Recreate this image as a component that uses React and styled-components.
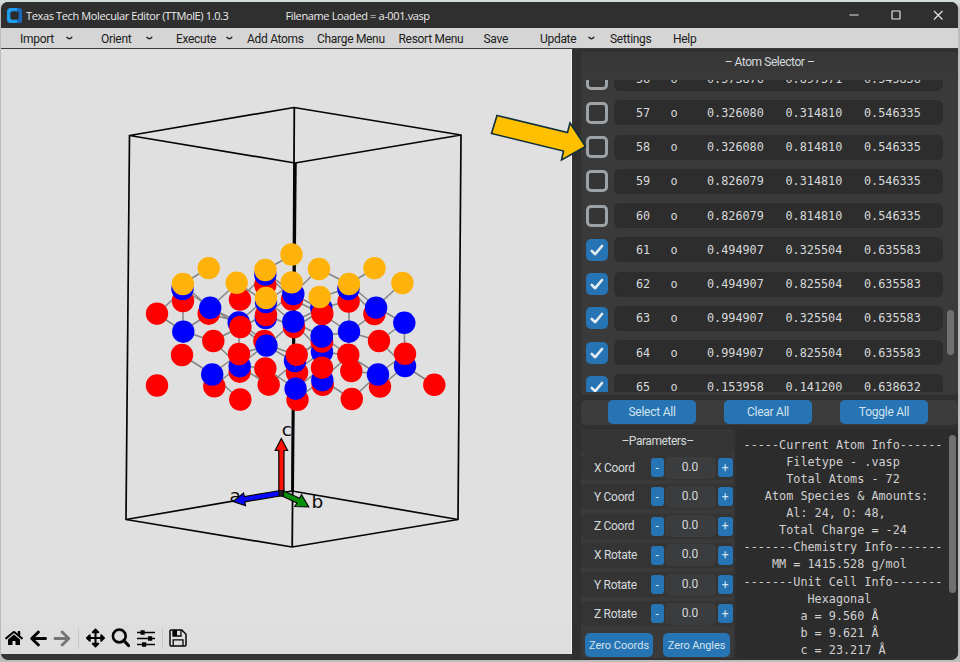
import React from 'react';
import styled, { createGlobalStyle } from 'styled-components';
import { FaHome, FaArrowLeft, FaArrowRight, FaArrowsAlt } from 'react-icons/fa';

const Global = createGlobalStyle`
  * { box-sizing: border-box; }
  body { margin: 0; background: #c9c9c9; overflow: hidden; font-family: Roboto, "Liberation Sans", sans-serif; }
`;

const Desktop = styled.div`
  position: relative;
  width: 960px;
  height: 662px;
  padding: 2px 2px 2px 1px;
  background: linear-gradient(#d3dcda 0, #d3dcda 2px, #bcbcbc 10px, #bcbcbc 100%);
`;

const Window = styled.div`
  height: 658px;
  display: flex;
  flex-direction: column;
  border-radius: 7px;
  overflow: hidden;
  background: #343434;
`;

const TitleBar = styled.header`
  height: 26px;
  flex: none;
  display: flex;
  align-items: center;
  padding-left: 6px;
  background: #2f2f2f;
  color: #ececec;
  font: 11px "Open Sans", sans-serif;
  letter-spacing: -0.37px;
  white-space: pre;
`;

const AppTitle = styled.span`
  width: 259.5px;
  margin-left: 4px;
`;

const WindowControls = styled.div`
  margin-left: auto;
  margin-right: 15px;
  display: flex;
  gap: 32px;
  svg { display: block; }
`;

const MenuBar = styled.nav`
  height: 21px;
  flex: none;
  display: flex;
  align-items: center;
  background: #d5d5d5;
  border-bottom: 1px solid #3b3b3b;
  padding: 1px 0 0 19px;
  color: #202020;
  font-size: 12px;
  letter-spacing: -0.3px;
`;

const MenuItem = styled.div`
  width: ${p => p.$w}px;
  flex: none;
  display: flex;
  align-items: center;
  white-space: nowrap;
`;

const MenuLabel = styled.span`
  width: ${p => p.$w ? p.$w + 'px' : 'auto'};
`;

const Main = styled.main`
  flex: 1;
  min-height: 0;
  display: flex;
`;

const Viewport = styled.section`
  width: 571px;
  height: 605px;
  flex: none;
  display: flex;
  flex-direction: column;
  background: #e0e0e0;
  border-right: 1px solid #f0f0f0;
  border-bottom-left-radius: 3px;
`;

const Scene = styled.svg`
  display: block;
  flex: none;
`;

const PlotTools = styled.div`
  flex: 1;
  display: flex;
  align-items: center;
  padding-left: 3px;
  background: #dedede;
  color: #050505;
`;

const Tool = styled.span`
  width: ${p => p.$w || 24}px;
  height: 20px;
  flex: none;
  display: flex;
  align-items: center;
  justify-content: center;
  color: ${p => (p.$muted ? '#757575' : '#050505')};
`;

const ToolRule = styled.span`
  width: 1px;
  height: 21px;
  margin: 0 ${p => p.$gap}px;
  background: #c6c6c6;
`;

const Side = styled.aside`
  flex: 1;
  display: flex;
  flex-direction: column;
  padding: 3px 1px 0 9px;
  background: #303030;
  color: #d5dadd;
`;

const SelectorFrame = styled.div`
  height: 343px;
  flex: none;
  background: #383838;
  border-radius: 4px;
`;

const SelectorTitle = styled.h2`
  height: 22px;
  margin: 0;
  font-size: 12px;
  line-height: 21px;
  font-weight: 400;
  letter-spacing: -0.45px;
  text-align: center;
`;

const ScrollFrame = styled.div`
  height: 321px;
  display: flex;
  justify-content: space-between;
  padding: 6px 4px 6px 5px;
  background: #3a3a3a;
  border-radius: 5px;
`;

const AtomList = styled.div`
  width: 357px;
  height: 312px;
  overflow: hidden;
`;

const AtomRows = styled.div`
  margin-top: -14px;
  display: flex;
  flex-direction: column;
  gap: 9.25px;
`;

const AtomRow = styled.div`
  height: 25px;
  display: flex;
  gap: 6px;
  align-items: center;
`;

const Check = styled.span`
  width: 22px;
  height: 22px;
  flex: none;
  border-radius: 5px;
  border: ${p => (p.$on ? '0' : '3px solid #9da2a6')};
  background: ${p => (p.$on ? '#2674b4' : '#353535')};
  display: grid;
  place-items: center;
`;

const AtomRecord = styled.div`
  width: 329px;
  height: 25px;
  padding-left: 22px;
  border-radius: 6px;
  background: #2d2d2d;
  display: grid;
  grid-template-columns: 34.5px 36.500px 78.500px 78.500px 78px;
  align-items: center;
  font: 11.8px "DejaVu Sans Mono", monospace;
  color: #d6d9db;
  white-space: pre;
`;

const ListTrack = styled.div`
  width: 7px;
  padding-top: 230px;
`;

const Thumb = styled.div`
  width: 7px;
  height: ${p => p.$h}px;
  border-radius: 4px;
  background: #707070;
`;

const SelectBar = styled.div`
  height: 25px;
  margin-top: 5px;
  flex: none;
  display: flex;
  gap: 28px;
  padding-left: 27px;
  background: #3c3c3c;
  border-radius: 5px;
`;

const Button = styled.button`
  width: ${p => p.$w}px;
  height: ${p => p.$h || 24}px;
  padding: 0;
  flex: none;
  border: 0;
  border-radius: ${p => (p.$small ? 3 : 5)}px;
  background: #2674b4;
  color: #d3e3ee;
  font: ${p => p.$size || 12}px Roboto, sans-serif;
  letter-spacing: ${p => p.$track || '-0.25px'};
  white-space: nowrap;
`;

const Lower = styled.div`
  height: 229px;
  margin-top: 4px;
  display: flex;
  gap: 2px;
`;

const Parameters = styled.div`
  width: 153px;
  background: #3a3a3a;
  border-radius: 4px;
`;

const ParametersTitle = styled.h2`
  height: 25px;
  margin: 0;
  line-height: 24px;
  font-size: 12px;
  font-weight: 400;
  letter-spacing: -0.45px;
  text-align: center;
  background: #353535;
  border-radius: 5px;
`;

const ParamRows = styled.div`
  height: 177px;
  padding-top: 1px;
  display: flex;
  flex-direction: column;
  gap: 4.25px;
`;

const ParamRow = styled.div`
  height: 25px;
  display: flex;
  align-items: center;
  background: #343434;
  border-radius: 5px;
`;

const ParamName = styled.span`
  width: 69.500px;
  padding-left: 13px;
  font-size: 12px;
  letter-spacing: -0.3px;
  white-space: nowrap;
`;

const ParamValue = styled.span`
  width: 51px;
  height: 22px;
  margin: 0 2px 0 1px;
  border-radius: 5px;
  background: #3b3c3d;
  text-align: center;
  line-height: 21px;
  font-size: 12px;
`;

const ZeroRow = styled.div`
  display: flex;
  gap: 10px;
  padding: 2px 0 0 4px;
`;

const InfoPanel = styled.div`
  width: 222px;
  background: #2c2c2c;
  border-radius: 6px 6px 6px 5px;
  display: flex;
  justify-content: space-between;
  padding: 6px 2px 0 8px;
`;

const InfoText = styled.div`
  width: 198px;
  padding-top: 1.6px;
  flex: none;
  font: 11.8px/17.13px "DejaVu Sans Mono", monospace;
  color: #d0d0d0;
  text-align: center;
  white-space: pre;
  display: flex;
  flex-direction: column;
  align-items: center;
`;

const PointerArrow = styled.svg`
  position: absolute;
  left: 485px;
  top: 105px;
`;

const GREY = '#848484';
const RED = '#ff0000';
const BLUE = '#0000ff';
const GOLD = '#ffb20a';

const bonds = [
  [208, 268, 183, 284], [183, 290, 157, 314], [157, 314, 183, 331], [183, 300, 183, 331],
  [183, 284, 210, 308], [186, 291, 240, 327], [183, 331, 209, 314], [183, 331, 213, 341], [213, 341, 240, 327],
  [210, 308, 237, 283], [210, 308, 239, 322], [209, 314, 240, 322], [182, 355, 212, 374], [212, 374, 239, 354],
  [213, 341, 239, 366], [214, 386, 239, 366], [212, 374, 240, 400], [239, 327, 239, 354],
  [237, 283, 266, 302], [240, 299, 265, 274], [239, 322, 266, 298], [240, 327, 266, 315],
  [239, 322, 264, 341], [240, 327, 267, 346], [239, 354, 267, 346], [239, 366, 269, 342],
  [239, 366, 269, 385], [240, 366, 265, 368], [265, 270, 292, 255], [265, 272, 292, 299], [266, 272, 294, 294],
  [266, 302, 294, 282], [266, 300, 293, 322], [265, 315, 293, 294], [266, 315, 295, 327],
  [267, 346, 293, 322], [267, 345, 297, 355], [267, 346, 295, 362], [268, 385, 297, 361], [265, 368, 296, 389],
  [293, 294, 319, 269], [293, 294, 321, 309], [292, 299, 322, 314], [293, 322, 321, 308], [294, 328, 322, 310],
  [293, 322, 322, 336], [293, 322, 322, 352], [295, 361, 322, 336], [297, 354, 322, 342],
  [297, 370, 322, 352], [295, 389, 322, 368], [297, 399, 322, 380], [319, 269, 349, 284],
  [320, 297, 349, 288], [321, 308, 349, 301], [322, 314, 349, 332], [322, 336, 349, 332],
  [322, 336, 348, 355], [322, 352, 348, 355], [322, 380, 349, 355], [322, 380, 352, 399],
  [349, 284, 375, 268], [349, 284, 376, 307], [349, 288, 374, 314], [349, 300, 349, 332],
  [349, 332, 374, 314], [349, 332, 379, 341], [376, 307, 402, 283], [376, 307, 404, 323],
  [379, 341, 404, 323], [379, 341, 405, 366], [404, 323, 405, 354], [405, 366, 434, 385],
  [405, 354, 378, 374], [405, 366, 380, 387], [352, 399, 378, 374], [351, 371, 378, 374], [348, 355, 378, 374],
];

const atoms = [
  [RED, 183, 301], [RED, 157, 313.7], [RED, 208.7, 313.7], [RED, 240, 299.6], [RED, 213.3, 341],
  [RED, 182, 355], [RED, 239.7, 371.7], [RED, 214.3, 386.3], [RED, 157, 385.5], [RED, 240.3, 399.5],
  [RED, 265.3, 368.5], [RED, 268.7, 384.7], [RED, 264.3, 341], [RED, 265.3, 285], [RED, 292, 299.5],
  [RED, 294, 327], [RED, 297, 372.5], [RED, 297.5, 399.8], [RED, 322, 342.5], [RED, 322.7, 384.8],
  [RED, 348.6, 301.5], [RED, 348.3, 354.7], [RED, 351.3, 371], [RED, 351.8, 399], [RED, 374.4, 314],
  [RED, 379, 341], [RED, 380, 386.6], [RED, 434.3, 384.8],
  [BLUE, 182.5, 289], [BLUE, 183.3, 331.7], [BLUE, 238.7, 322.4], [BLUE, 210.2, 307.8],
  [BLUE, 212.2, 374.5], [BLUE, 239.7, 366.2], [BLUE, 265.3, 274.5], [BLUE, 265.7, 318],
  [BLUE, 266.5, 345.6], [BLUE, 293.3, 294], [BLUE, 293.3, 321.7], [BLUE, 295, 361],
  [BLUE, 321.3, 308], [BLUE, 322, 352], [BLUE, 322.3, 380.2],
  [BLUE, 348.4, 289], [BLUE, 349, 331.7], [BLUE, 376.1, 307.6], [BLUE, 404.3, 322.8],
  [BLUE, 378, 374.5], [BLUE, 405, 366], [BLUE, 295.6, 388.7],
  [RED, 322, 341.5], [BLUE, 321.8, 336],
  [RED, 240.4, 327], [RED, 239, 354], [RED, 266, 315], [BLUE, 266, 302], [RED, 296.7, 354.8], [RED, 322.3, 314],
  [BLUE, 321.8, 336.5],
  [RED, 322, 367.7], [RED, 405, 353.8],
  [GOLD, 208.7, 268.1], [GOLD, 182.9, 284], [GOLD, 236.7, 282.8], [GOLD, 265.4, 270],
  [GOLD, 266, 298], [GOLD, 291.5, 254.5], [GOLD, 291.7, 282.4], [GOLD, 319, 269],
  [GOLD, 319.7, 297], [GOLD, 349, 284], [GOLD, 374.5, 268.2], [GOLD, 402.4, 283],
];

function MoleculeScene() {
  return (
    <Scene width="570" height="573" viewBox="1 49 570 573">
      <g stroke="#050505" strokeWidth="1.7" fill="none" strokeLinejoin="round">
        <path d="M129.5 135.5L294 107.5L461 135L295 163Z" />
        <path d="M129.5 135.5L126 519.5L292 547L458 519.5L461 135" />
        <path d="M126 519.5L292 491L458 519.5" />
        <path d="M294.3 107.5L292.2 491M295.3 163L292.2 547" strokeWidth="1.800" />
        <path d="M295.3 163L292.6 491" strokeWidth="2.8" />
      </g>
      <g stroke={GREY} strokeWidth="1.5">
        {bonds.map(([x1, y1, x2, y2], i) => <line key={i} x1={x1} y1={y1} x2={x2} y2={y2} />)}
      </g>
      {atoms.map(([fill, cx, cy], i) => <circle key={i} cx={cx} cy={cy} r="11.2" fill={fill} />)}
      <g fontFamily="DejaVu Sans" fontSize="18.5" fill="#0b0b0b">
        <text x="229.5" y="502">a</text>
        <text x="281.8" y="436">c</text>
        <text x="311.5" y="508">b</text>
      </g>
      <g stroke="#050505" strokeWidth="1.2">
        <path fill="#ff1008" d="M278.8 493V450.5H275.2L281.3 438.5L287.6 450.5H284V493Z" />
        <path fill="#0808ff" d="M280.5 490.5L244.3 496.6L243.5 493L233 501.5L245.5 505.5L244.8 501.8L281.2 495.8Z" />
        <path fill="#079007" d="M282.8 490.5L299.5 498.3L301.5 494.8L308.7 506.8L294.8 506.5L297 503L280.5 495.2Z" />
        <path fill="#222" d="M279 490.5h4.5v5.5h-4.5z" />
      </g>
    </Scene>
  );
}

function Chevron() {
  return (
    <svg width="7" height="5" viewBox="0 0 7 5">
      <path d="M1 1.3Q3.400 4.200 5.800 1.300" fill="none" stroke="#202020" strokeWidth="1.4" strokeLinecap="round" />
    </svg>
  );
}

function Logo() {
  return (
    <svg width="15" height="15" viewBox="0 0 15 15">
      <rect width="15" height="15" rx="3.5" fill="#1c9df0" />
      <path d="M10 0h1.5A3.5 3.5 0 0 1 15 3.500V11.500A3.500 3.500 0 0 1 11.500 15H10z" fill="#1768b8" />
      <rect x="3.300" y="3.300" width="8.400" height="8.400" rx="2.500" fill="#2c2c2c" />
    </svg>
  );
}

const menus = [
  ['Import', 81, 45.5], ['Orient', 75, 44.5], ['Execute', 71, 49.5], ['Add Atoms', 70],
  ['Charge Menu', 81.5], ['Resort Menu', 85], ['Save', 56.5], ['Update', 70, 48],
  ['Settings', 63], ['Help', 40],
];

const rows = [
  [56, '0.573876', '0.897371', '0.545836'],
  [57, '0.326080', '0.314810', '0.546335'],
  [58, '0.326080', '0.814810', '0.546335'],
  [59, '0.826079', '0.314810', '0.546335'],
  [60, '0.826079', '0.814810', '0.546335'],
  [61, '0.494907', '0.325504', '0.635583'],
  [62, '0.494907', '0.825504', '0.635583'],
  [63, '0.994907', '0.325504', '0.635583'],
  [64, '0.994907', '0.825504', '0.635583'],
  [65, '0.153958', '0.141200', '0.638632'],
];

const params = ['X Coord', 'Y Coord', 'Z Coord', 'X Rotate', 'Y Rotate', 'Z Rotate'];

const info = [
  '-----Current Atom Info------', 'Filetype - .vasp', 'Total Atoms - 72',
  ' Atom Species & Amounts:', 'Al: 24, O: 48,  ', 'Total Charge = -24',
  '-------Chemistry Info-------', 'MM = 1415.528 g/mol ', '-------Unit Cell Info-------',
  'Hexagonal ', 'a = 9.560 Å ', 'b = 9.621 Å ', 'c = 23.217 Å',
];

export default function App() {
  return (
    <Desktop>
      <Global />
      <Window>
        <TitleBar>
          <Logo />
          <AppTitle>Texas Tech Molecular Editor (TTMolE) 1.0.3</AppTitle>
          <span>Filename Loaded = a-001.vasp</span>
          <WindowControls>
            <svg width="10" height="10"><path d="M0.500 5H9.500" stroke="#e5e5e5" /></svg>
            <svg width="10" height="10"><rect x="1" y="1" width="8" height="8" rx="0.600" fill="none" stroke="#e5e5e5" strokeWidth="1.200" /></svg>
            <svg width="10" height="10"><path d="M1 1L9.500 9.500M9.500 1L1 9.500" stroke="#e5e5e5" strokeWidth="1.200" /></svg>
          </WindowControls>
        </TitleBar>
        <MenuBar>
          {menus.map(([name, w, labelW]) => (
            <MenuItem key={name} $w={w}>
              <MenuLabel $w={labelW}>{name}</MenuLabel>
              {labelW && <Chevron />}
            </MenuItem>
          ))}
        </MenuBar>
        <Main>
          <Viewport>
            <MoleculeScene />
            <PlotTools>
              <Tool $w={20}><FaHome size={18} /></Tool>
              <Tool $w={29}><FaArrowLeft size={19} /></Tool>
              <Tool $w={18} $muted><FaArrowRight size={19} /></Tool>
              <ToolRule $gap={7} />
              <Tool $w={19}><FaArrowsAlt size={20} /></Tool>
              <Tool $w={31}>
                <svg width="20" height="20" viewBox="0 0 20 20" fill="none" stroke="#050505">
                  <circle cx="8.300" cy="8" r="6.400" strokeWidth="2.600" />
                  <path d="M12.800 12.500L17.500 17.500" strokeWidth="3.200" strokeLinecap="round" />
                </svg>
              </Tool>
              <Tool $w={20}>
                <svg width="18" height="18" viewBox="0 0 18 18">
                  <path d="M0 3.500H18M0 9.500H18M0 15.500H18" stroke="#050505" strokeWidth="1.300" />
                  <path d="M3.500 1.300h4.200v4.400H3.500zM11 7.300h4.200v4.400H11zM5 13.300h4.200v4.400H5z" fill="#050505" />
                </svg>
              </Tool>
              <ToolRule $gap={5.5} />
              <Tool $w={20}>
                <svg width="18" height="18" viewBox="0 0 18 18">
                  <path d="M2 1H12.800L17 5.200V16Q17 17 16 17H2Q1 17 1 16V2Q1 1 2 1Z" fill="none" stroke="#050505" strokeWidth="1.500" />
                  <path d="M4 1.500V7H12V1.500M4.200 17V10.800H14V17" fill="none" stroke="#050505" strokeWidth="1.300" />
                  <path d="M4 1h4v6H4z" fill="#050505" />
                </svg>
              </Tool>
            </PlotTools>
          </Viewport>
          <Side>
            <SelectorFrame>
              <SelectorTitle>– Atom Selector –</SelectorTitle>
              <ScrollFrame>
                <AtomList>
                  <AtomRows>
                    {rows.map(([id, x, y, z]) => (
                      <AtomRow key={id}>
                        <Check $on={id > 60}>
                          {id > 60 && (
                            <svg width="14" height="14" viewBox="0 0 14 14">
                              <path d="M1.800 8L5.200 11.200L12 3" fill="none" stroke="#e4ebf0" strokeWidth="2.600" strokeLinecap="round" strokeLinejoin="round" />
                            </svg>
                          )}
                        </Check>
                        <AtomRecord>
                          <span>{id}</span><span>o</span><span>{x}</span><span>{y}</span><span>{z}</span>
                        </AtomRecord>
                      </AtomRow>
                    ))}
                  </AtomRows>
                </AtomList>
                <ListTrack><Thumb $h={45} /></ListTrack>
              </ScrollFrame>
            </SelectorFrame>
            <SelectBar>
              <Button $w={88}>Select All</Button>
              <Button $w={88}>Clear All</Button>
              <Button $w={88}>Toggle All</Button>
            </SelectBar>
            <Lower>
              <Parameters>
                <ParametersTitle>–Parameters–</ParametersTitle>
                <ParamRows>
                  {params.map(name => (
                    <ParamRow key={name}>
                      <ParamName>{name}</ParamName>
                      <Button $w={13} $h={19} $small>-</Button>
                      <ParamValue>0.0</ParamValue>
                      <Button $w={15} $h={19} $small>+</Button>
                    </ParamRow>
                  ))}
                </ParamRows>
                <ZeroRow>
                  <Button $w={68} $size={11} $track="0">Zero Coords</Button>
                  <Button $w={67} $size={11} $track="-0.1px">Zero Angles</Button>
                </ZeroRow>
              </Parameters>
              <InfoPanel>
                <InfoText>{info.map(line => <span key={line}>{line}</span>)}</InfoText>
                <Thumb $h={158} />
              </InfoPanel>
            </Lower>
          </Side>
        </Main>
      </Window>
      <PointerArrow width="105" height="60" viewBox="485 105 105 60">
        <path d="M497 115.500L567.500 132.500L570 123L585.500 146.500L561.500 160L563.500 151L491.500 133.500Z" fill="#ffc000" stroke="#10303c" strokeWidth="1.600" />
      </PointerArrow>
    </Desktop>
  );
}
